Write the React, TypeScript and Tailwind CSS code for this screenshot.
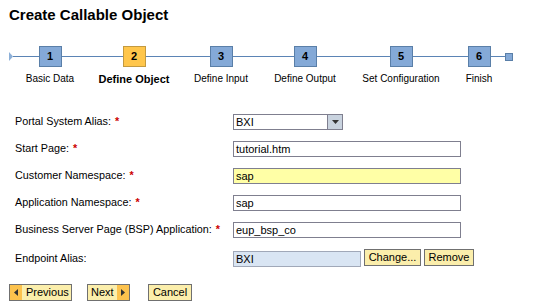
import React from "react";

const font = { fontFamily: '"Liberation Sans", Arial, sans-serif' };

const steps = [
  { n: 1, label: "Basic Data", w: 74 },
  { n: 2, label: "Define Object", w: 94, active: true },
  { n: 3, label: "Define Input", w: 80 },
  { n: 4, label: "Define Output", w: 88 },
  { n: 5, label: "Set Configuration", w: 104 },
  { n: 6, label: "Finish", w: 52 },
];

function Req() {
  return <span className="text-[#cc0000] font-bold ml-[4px]">*</span>;
}

function Row({ label, req, children, extra }: { label: string; req?: boolean; children: React.ReactNode; extra?: string }) {
  return (
    <div className={"flex items-center h-[27px] " + (extra || "")}>
      <div className="w-[218px] shrink-0 text-[10.8px] text-black whitespace-nowrap">
        {label}
        {req && <Req />}
      </div>
      {children}
    </div>
  );
}

function TextBox({ value, bg = "bg-white", border = "border-[#7f7f8f]", w = "w-[228px]" }: { value: string; bg?: string; border?: string; w?: string }) {
  return (
    <div className={`${w} h-[16px] border ${border} ${bg} text-[11px] leading-[14px] pl-[2px] text-black`}>{value}</div>
  );
}

export default function App() {
  return (
    <div className="w-[546px] h-[308px] bg-white text-black overflow-hidden" style={font}>
      <div className="pl-[9px] pt-[5px] text-[15px] leading-[20px] font-bold">Create Callable Object</div>

      {/* wizard */}
      <div className="flex mt-[21px] pl-[9px]">
        <div className="h-[21px] flex items-center">
          <svg width="4" height="9" viewBox="0 0 4 9" className="block">
            <polygon points="0,0 4,4.5 0,9" fill="#8db0d8" />
          </svg>
        </div>
        {steps.map((s) => (
          <div key={s.n} className="flex flex-col items-center" style={{ width: s.w }}>
            <div className="flex items-center w-full h-[21px]">
              <div className="flex-1 h-px bg-[#5b84b5]" />
              <div
                className={
                  "w-[23px] h-[21px] border flex items-center justify-center text-[11px] font-bold " +
                  (s.active ? "bg-[#ffc64b] border-[#c39a40]" : "bg-[#84a9d7] border-[#5a7fa8]")
                }
              >
                {s.n}
              </div>
              <div className="flex-1 h-px bg-[#5b84b5]" />
            </div>
            <div className={"mt-[6px] leading-[12px] whitespace-nowrap " + (s.active ? "text-[11px] font-bold" : "text-[10px]")}>
              {s.label}
            </div>
          </div>
        ))}
        <div className="h-[21px] flex items-center">
          <div className="w-[8px] h-[8px] bg-[#84a9d7] border border-[#5a7fa8]" />
        </div>
      </div>

      {/* form */}
      <div className="pl-[15px] mt-[23px]">
        <Row label="Portal System Alias:" req>
          <div className="flex w-[110px] h-[16px] border border-[#7f7f8f] bg-white">
            <div className="flex-1 text-[11px] leading-[14px] pl-[2px]">BXI</div>
            <div className="w-[15px] border-l border-[#7f7f8f] bg-[#c9d3df] flex items-center justify-center">
              <svg width="7" height="4" viewBox="0 0 7 4">
                <polygon points="0,0 7,0 3.5,4" fill="#333" />
              </svg>
            </div>
          </div>
        </Row>
        <Row label="Start Page:" req>
          <TextBox value="tutorial.htm" />
        </Row>
        <Row label="Customer Namespace:" req>
          <TextBox value="sap" bg="bg-[#ffffa6]" />
        </Row>
        <Row label="Application Namespace:" req>
          <TextBox value="sap" />
        </Row>
        <Row label="Business Server Page (BSP) Application:" req>
          <TextBox value="eup_bsp_co" />
        </Row>
        <Row label="Endpoint Alias:" extra="mt-[2px]">
          <TextBox value="BXI" bg="bg-[#d9e5f3]" border="border-[#a0a8b8]" w="w-[128px]" />
          <div className="ml-[3px] h-[17px] w-[57px] text-center border border-[#707070] bg-[#fbeeab] text-[11px] leading-[15px] mb-[2px]">Change...</div>
          <div className="ml-[3px] h-[17px] w-[50px] text-center border border-[#707070] bg-[#fbeeab] text-[11px] leading-[15px] mb-[2px]">Remove</div>
        </Row>
      </div>

      {/* bottom buttons */}
      <div className="flex pl-[9px] mt-[12px] text-[11px]">
        <div className="flex h-[17px] w-[63px] border border-[#707070]">
          <div className="w-[12px] bg-[#fcc24d] flex items-center justify-center">
            <svg width="4" height="7" viewBox="0 0 4 7">
              <polygon points="4,0 4,7 0,3.5" fill="#333" />
            </svg>
          </div>
          <div className="flex-1 bg-[#fbeeab] leading-[15px] pl-[4px]">Previous</div>
        </div>
        <div className="flex h-[17px] w-[43px] border border-[#707070] ml-[15px]">
          <div className="flex-1 bg-[#fbeeab] leading-[15px] pl-[3px]">Next</div>
          <div className="w-[12px] bg-[#fcc24d] flex items-center justify-center">
            <svg width="4" height="7" viewBox="0 0 4 7">
              <polygon points="0,0 0,7 4,3.5" fill="#333" />
            </svg>
          </div>
        </div>
        <div className="h-[17px] w-[44px] border border-[#707070] ml-[18px] bg-[#fbeeab] leading-[15px] text-center">Cancel</div>
      </div>
    </div>
  );
}
